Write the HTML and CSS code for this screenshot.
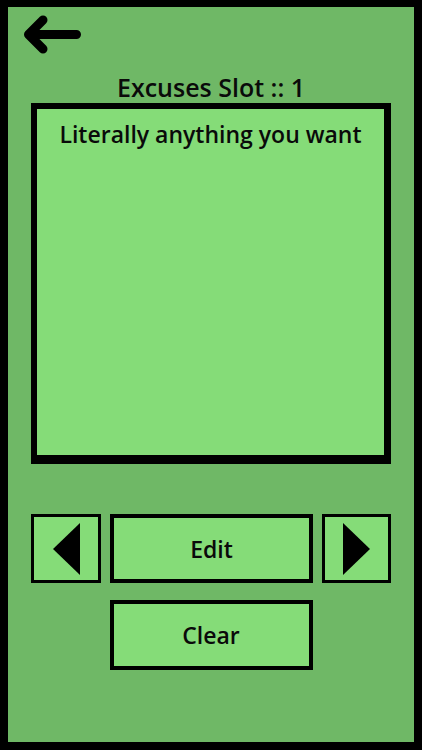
FILE: index.html
```html
<!DOCTYPE html>
<html lang="en">
<head>
  <meta charset="UTF-8">
  <meta name="viewport" content="width=device-width, initial-scale=1.0">
  <title>Excuses Slot</title>
  <link rel="stylesheet" href="styles.css">
</head>
<body>
  <div class="screen">
    <div class="top-bar">
      <button class="back" aria-label="Back">
        <svg width="62" height="44" viewBox="0 0 62 44">
          <path d="M23 8 L8.5 22.5 L23 37 M8.5 22.5 H56.5" fill="none" stroke="#000" stroke-width="9" stroke-linecap="round" stroke-linejoin="round"/>
        </svg>
      </button>
    </div>

    <h1 class="slot-title">Excuses Slot :: 1</h1>

    <div class="excuse-box">
      <p class="excuse-text">Literally anything you want</p>
    </div>

    <div class="controls">
      <button class="nav-btn prev" aria-label="Previous"><span class="tri tri-left"></span></button>
      <button class="wide-btn">Edit</button>
      <button class="nav-btn next" aria-label="Next"><span class="tri tri-right"></span></button>
    </div>

    <button class="wide-btn clear">Clear</button>
  </div>
</body>
</html>
```

FILE: styles.css
```css
body {
  margin: 0;
  font-family: "Open Sans", "Noto Sans", sans-serif;
  color: #0a0a0a;
}
.screen {
  box-sizing: border-box;
  height: 750px;
  border: 8px solid #000;
  border-top-width: 7px;
  background-color: #6fb866;
  display: flex;
  flex-direction: column;
  align-items: center;
}
.top-bar {
  align-self: stretch;
  padding: 5px 0 0 12px;
}
.back {
  display: block;
  padding: 0;
  border: none;
  background: none;
  cursor: pointer;
}
.back svg {
  display: block;
}
.slot-title {
  margin: 18px 0 0;
  font-size: 25px;
  line-height: 26px;
  font-weight: 600;
}
.excuse-box {
  box-sizing: border-box;
  width: 360px;
  height: 361px;
  margin-top: 3px;
  border: 6px solid #000;
  border-width: 6px 7px 9px 6px;
  background-color: #85dc78;
  padding-top: 12px;
  text-align: center;
}
.excuse-text {
  margin: 0;
  font-size: 23px;
  line-height: 26px;
  font-weight: 600;
}
.controls {
  display: flex;
  gap: 9px;
  margin-top: 50px;
}
button.nav-btn,
button.wide-btn {
  box-sizing: border-box;
  background-color: #85dc78;
  border: 3px solid #000;
  padding: 0;
  display: flex;
  align-items: center;
  justify-content: center;
  cursor: pointer;
  font-family: inherit;
  color: #0a0a0a;
}
.nav-btn {
  width: 70px;
  height: 69px;
}
.nav-btn.next {
  width: 69px;
}
.wide-btn {
  width: 203px;
  height: 69px;
  border-width: 4px !important;
  font-size: 23px;
  font-weight: 600;
}
.wide-btn.clear {
  height: 70px;
  margin-top: 17px;
}
.tri {
  width: 0;
  height: 0;
  border-top: 26.5px solid transparent;
  border-bottom: 26.5px solid transparent;
}
.tri-left {
  border-right: 27px solid #000;
}
.tri-right {
  border-left: 27px solid #000;
}
```
